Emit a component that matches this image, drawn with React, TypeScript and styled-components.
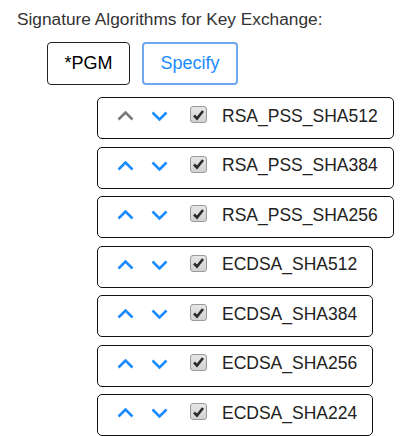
import { useState } from "react";
import styled, { createGlobalStyle } from "styled-components";

const GlobalStyle = createGlobalStyle`
  body {
    margin: 0;
    background: #fff;
    font-family: "Liberation Sans", Arial, sans-serif;
  }
`;

const ALGORITHMS = [
  "RSA_PSS_SHA512",
  "RSA_PSS_SHA384",
  "RSA_PSS_SHA256",
  "ECDSA_SHA512",
  "ECDSA_SHA384",
  "ECDSA_SHA256",
  "ECDSA_SHA224",
];

const Page = styled.div`
  padding: 9px 0 0 17px;
`;

const Title = styled.div`
  font-size: 17.3px;
  color: #333;
  line-height: 20px;
`;

const ModeBar = styled.div`
  display: flex;
  gap: 12px;
  margin: 13px 0 0 30px;
`;

const ModeButton = styled.button<{ $active?: boolean }>`
  height: 43px;
  padding: 0 ${({ $active }) => ($active ? "14px" : "12px")};
  min-width: ${({ $active }) => ($active ? "96px" : "83px")};
  font-family: inherit;
  font-size: 18px;
  background: #fff;
  border-radius: 4px;
  color: ${({ $active }) => ($active ? "#1a8cff" : "#000")};
  border: ${({ $active }) => ($active ? "2px solid #6fa8f0" : "1px solid #222")};
  cursor: pointer;
`;

const List = styled.div`
  display: flex;
  flex-direction: column;
  align-items: flex-start;
  gap: 7.5px;
  margin: 12px 0 0 80px;
`;

const Row = styled.div`
  display: inline-flex;
  align-items: center;
  height: 36px;
  padding: 0 15px 4px 17px;
  border: 1px solid #111;
  border-radius: 5px;
`;

const Arrow = styled.button<{ $disabled?: boolean }>`
  display: flex;
  align-items: center;
  justify-content: center;
  width: 20px;
  height: 20px;
  padding: 0;
  margin-right: 14px;
  border: none;
  background: none;
  color: ${({ $disabled }) => ($disabled ? "#7a7a7a" : "#1a8cff")};
  cursor: pointer;
`;

const Check = styled.span`
  display: flex;
  align-items: center;
  justify-content: center;
  width: 15px;
  height: 15px;
  margin: 0 15px 3px 7px;
  border: 1px solid #9a9a9a;
  border-radius: 3px;
  background: linear-gradient(#e6e6e6, #d2d2d2);
`;

const Label = styled.span`
  font-size: 17.5px;
  color: #222;
`;

const Chevron = ({ up }: { up?: boolean }) => (
  <svg width="17" height="10" viewBox="0 0 17 10">
    <path
      d={up ? "M1.5 8.5 L8.5 1.5 L15.5 8.5" : "M1.5 1.5 L8.5 8.5 L15.5 1.5"}
      fill="none"
      stroke="currentColor"
      strokeWidth="2.6"
    />
  </svg>
);

const App = () => {
  const [mode, setMode] = useState("specify");

  return (
    <Page>
      <GlobalStyle />
      <Title>Signature Algorithms for Key Exchange:</Title>
      <ModeBar>
        <ModeButton $active={mode === "pgm"} onClick={() => setMode("pgm")}>
          *PGM
        </ModeButton>
        <ModeButton
          $active={mode === "specify"}
          onClick={() => setMode("specify")}
        >
          Specify
        </ModeButton>
      </ModeBar>
      <List>
        {ALGORITHMS.map((name, i) => (
          <Row key={name}>
            <Arrow $disabled={i === 0}>
              <Chevron up />
            </Arrow>
            <Arrow>
              <Chevron />
            </Arrow>
            <Check>
              <svg width="13" height="12" viewBox="0 0 13 12">
                <path
                  d="M2 6.5 L5 9.5 L11 2"
                  fill="none"
                  stroke="#2b2b2b"
                  strokeWidth="2.6"
                />
              </svg>
            </Check>
            <Label>{name}</Label>
          </Row>
        ))}
      </List>
    </Page>
  );
};

export default App;
